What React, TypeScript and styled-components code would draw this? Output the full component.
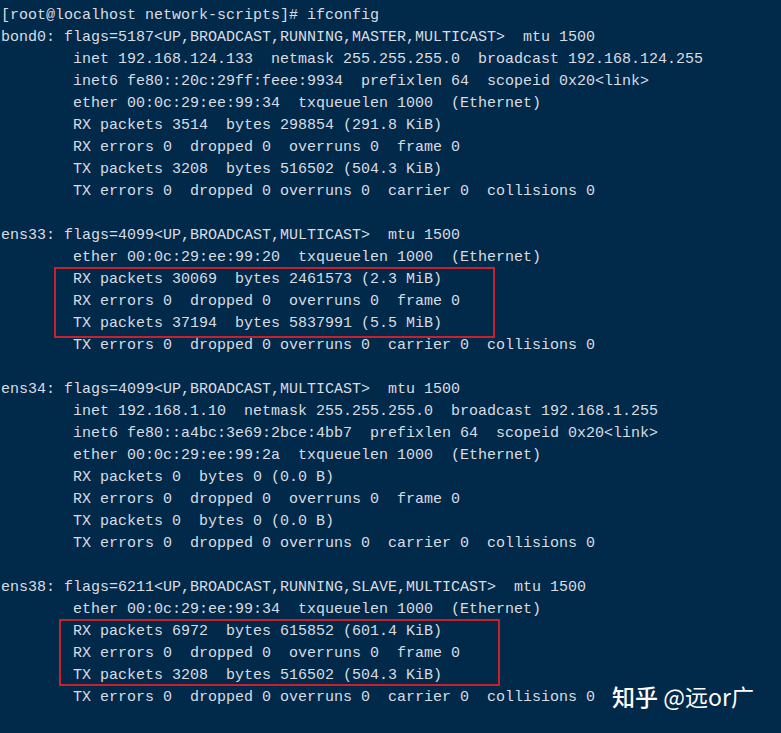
import React from "react";
import styled, { createGlobalStyle } from "styled-components";

const Global = createGlobalStyle`
  html, body {
    margin: 0;
    padding: 0;
    background: #01294a;
  }
`;

const Terminal = styled.div`
  width: 781px;
  height: 733px;
  box-sizing: border-box;
  padding: 5px 0 0 1px;
  background: #01294a;
  color: #d9dde2;
  font-family: "Liberation Mono", "DejaVu Sans Mono", monospace;
  font-size: 15px;
  line-height: 22px;
  overflow: hidden;
`;

const Line = styled.div`
  height: 22px;
  white-space: pre;
`;

const Highlight = styled.div<{ $left: number; $width: number; $extra: number }>`
  position: relative;
  &::after {
    content: "";
    position: absolute;
    left: ${(p) => p.$left}px;
    top: -2px;
    width: ${(p) => p.$width}px;
    bottom: ${(p) => -p.$extra}px;
    box-sizing: border-box;
    border: 2px solid #c8202c;
    pointer-events: none;
  }
`;

const Watermark = styled.span`
  display: inline-block;
  vertical-align: top;
  margin-left: 17px;
  margin-top: -4px;
  font-family: "Noto Sans CJK SC", "Noto Sans", sans-serif;
  font-size: 23px;
  line-height: 26px;
  height: 22px;
  color: #ffffff;
  white-space: pre;
`;

const Brand = styled.span`
  font-weight: 500;
`;

const I = "        ";

type Block =
  | { kind: "line"; text: string }
  | { kind: "box"; left: number; width: number; extra: number; lines: string[] };

const blocks: Block[] = [
  { kind: "line", text: "[root@localhost network-scripts]# ifconfig" },
  { kind: "line", text: "bond0: flags=5187<UP,BROADCAST,RUNNING,MASTER,MULTICAST>  mtu 1500" },
  { kind: "line", text: I + "inet 192.168.124.133  netmask 255.255.255.0  broadcast 192.168.124.255" },
  { kind: "line", text: I + "inet6 fe80::20c:29ff:feee:9934  prefixlen 64  scopeid 0x20<link>" },
  { kind: "line", text: I + "ether 00:0c:29:ee:99:34  txqueuelen 1000  (Ethernet)" },
  { kind: "line", text: I + "RX packets 3514  bytes 298854 (291.8 KiB)" },
  { kind: "line", text: I + "RX errors 0  dropped 0  overruns 0  frame 0" },
  { kind: "line", text: I + "TX packets 3208  bytes 516502 (504.3 KiB)" },
  { kind: "line", text: I + "TX errors 0  dropped 0 overruns 0  carrier 0  collisions 0" },
  { kind: "line", text: "" },
  { kind: "line", text: "ens33: flags=4099<UP,BROADCAST,MULTICAST>  mtu 1500" },
  { kind: "line", text: I + "ether 00:0c:29:ee:99:20  txqueuelen 1000  (Ethernet)" },
  {
    kind: "box",
    left: 53,
    width: 441,
    extra: 3,
    lines: [
      I + "RX packets 30069  bytes 2461573 (2.3 MiB)",
      I + "RX errors 0  dropped 0  overruns 0  frame 0",
      I + "TX packets 37194  bytes 5837991 (5.5 MiB)",
    ],
  },
  { kind: "line", text: I + "TX errors 0  dropped 0 overruns 0  carrier 0  collisions 0" },
  { kind: "line", text: "" },
  { kind: "line", text: "ens34: flags=4099<UP,BROADCAST,MULTICAST>  mtu 1500" },
  { kind: "line", text: I + "inet 192.168.1.10  netmask 255.255.255.0  broadcast 192.168.1.255" },
  { kind: "line", text: I + "inet6 fe80::a4bc:3e69:2bce:4bb7  prefixlen 64  scopeid 0x20<link>" },
  { kind: "line", text: I + "ether 00:0c:29:ee:99:2a  txqueuelen 1000  (Ethernet)" },
  { kind: "line", text: I + "RX packets 0  bytes 0 (0.0 B)" },
  { kind: "line", text: I + "RX errors 0  dropped 0  overruns 0  frame 0" },
  { kind: "line", text: I + "TX packets 0  bytes 0 (0.0 B)" },
  { kind: "line", text: I + "TX errors 0  dropped 0 overruns 0  carrier 0  collisions 0" },
  { kind: "line", text: "" },
  { kind: "line", text: "ens38: flags=6211<UP,BROADCAST,RUNNING,SLAVE,MULTICAST>  mtu 1500" },
  { kind: "line", text: I + "ether 00:0c:29:ee:99:34  txqueuelen 1000  (Ethernet)" },
  {
    kind: "box",
    left: 58,
    width: 441,
    extra: -1,
    lines: [
      I + "RX packets 6972  bytes 615852 (601.4 KiB)",
      I + "RX errors 0  dropped 0  overruns 0  frame 0",
      I + "TX packets 3208  bytes 516502 (504.3 KiB)",
    ],
  },
];

export default function App() {
  return (
    <>
      <Global />
      <Terminal>
        {blocks.map((b, i) =>
          b.kind === "line" ? (
            <Line key={i}>{b.text}</Line>
          ) : (
            <Highlight key={i} $left={b.left} $width={b.width} $extra={b.extra}>
              {b.lines.map((t, j) => (
                <Line key={j}>{t}</Line>
              ))}
            </Highlight>
          )
        )}
        <Line>
          {I + "TX errors 0  dropped 0 overruns 0  carrier 0  collisions 0"}
          <Watermark>
            <Brand>知乎</Brand> @远or广
          </Watermark>
        </Line>
      </Terminal>
    </>
  );
}
